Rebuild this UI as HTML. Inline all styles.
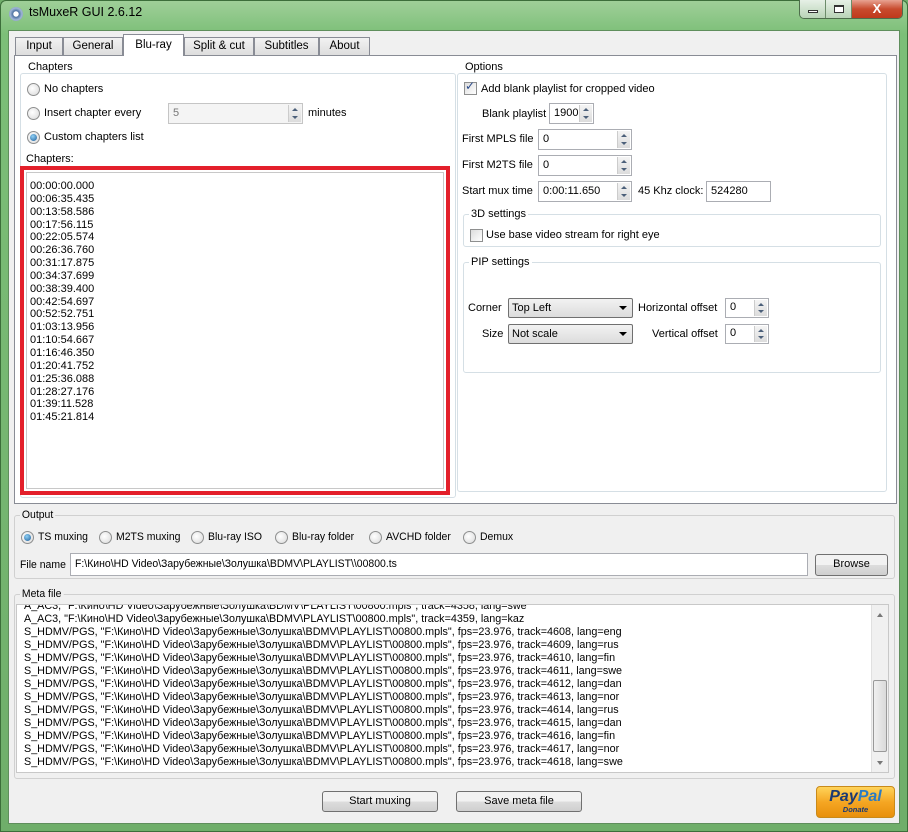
<!DOCTYPE html>
<html><head><meta charset="utf-8"><style>
*{box-sizing:border-box;margin:0;padding:0}
body{width:908px;height:832px;overflow:hidden;position:relative;background:#6fae6a;font-family:"Liberation Sans",sans-serif;font-size:11px;color:#000}
.a{position:absolute}
.frame{left:0;top:0;width:908px;height:832px;background:linear-gradient(180deg,#9fcf98 0%,#7cbf78 4%,#6fae6a 100%);border:1px solid #3c6e3a;border-radius:6px 6px 0 0}
.client{left:8px;top:30px;width:892px;height:794px;background:#f0f0f0;border:1px solid #5f8e5c}
.tab{top:37px;height:19px;border:1px solid #898c95;border-bottom:none;background:linear-gradient(#f2f2f2,#dcdcdc);text-align:center;line-height:17px;font-size:11.5px}
.tab.sel{top:34px;height:22px;background:#fff;z-index:3;line-height:20px}
.pane{left:14px;top:55px;width:883px;height:449px;background:#fff;border:1px solid #898c95}
.grp{border:1px solid #d5dfe5;border-radius:3px}
.rad{width:13px;height:13px;border-radius:50%;border:1px solid #8e8f8f;background:radial-gradient(circle at 40% 40%,#fff,#d8d8d8)}
.rad.on::after{content:"";position:absolute;left:2px;top:2px;width:7px;height:7px;border-radius:50%;background:radial-gradient(circle at 40% 35%,#8fd0f5,#1e5d99)}
.chk{width:13px;height:13px;border:1px solid #8e8f8f;background:linear-gradient(135deg,#dcdcdc,#fff)}
.box{background:#fff;border:1px solid #abadb3;padding-left:4px;line-height:18px}
.spin{width:13px;border-left:1px solid #ccc;background:linear-gradient(#f4f4f4,#dcdcdc);top:1px;bottom:1px;right:1px}
.spin::before,.spin::after{content:"";position:absolute;left:3px;border-left:3px solid transparent;border-right:3px solid transparent}
.spin::before{top:3px;border-bottom:3px solid #4c607a}
.spin::after{bottom:3px;border-top:3px solid #4c607a}
.combo{background:linear-gradient(#f2f2f2,#dcdcdc);border:1px solid #707070;border-radius:2px;padding-left:3px;line-height:18px}
.combo::after{content:"";position:absolute;right:5px;top:7px;border-left:4px solid transparent;border-right:4px solid transparent;border-top:4px solid #000}
.btn{background:linear-gradient(#f2f2f2 50%,#dddddd 50%,#cfcfcf);border:1px solid #707070;border-radius:3px;text-align:center;line-height:19px}
.n{transform-origin:0 0;transform:scaleX(.95);white-space:nowrap}
.meta div{height:13px;line-height:13px;white-space:nowrap;transform-origin:0 0;transform:scaleX(.98)}
</style></head><body>
<div class="a frame"></div>
<div class="a" style="left:9px;top:7px;width:14px;height:14px;border-radius:50%;background:radial-gradient(circle,#fff 25%,#4a6fa0 30%,#9fb6d6 60%,#6a7e99 100%)"></div>
<div class="a" style="left:29px;top:5px;font-size:12.5px;color:#000">tsMuxeR GUI 2.6.12</div>
<div class="a" style="left:799px;top:0;width:104px;height:19px;border:1px solid #4e6e4c;border-top:none;border-radius:0 0 5px 5px;overflow:hidden;display:flex">
 <div style="width:26px;background:linear-gradient(#e6f0e6,#b9d4b7);border-right:1px solid #6c8c6a;position:relative"><div class="a" style="left:8px;top:10px;width:10px;height:3px;border:1px solid #333;background:#fff"></div></div>
 <div style="width:26px;background:linear-gradient(#e6f0e6,#b9d4b7);border-right:1px solid #6c8c6a;position:relative"><div class="a" style="left:8px;top:5px;width:10px;height:8px;border:1px solid #333;border-top-width:2px;background:#fff"></div></div>
 <div style="flex:1;background:linear-gradient(#e8a392,#c84b2e 50%,#c0391c);color:#fff;text-align:center;font-weight:bold;font-size:13px;line-height:18px">X</div>
</div>
<div class="a client"></div>
<div class="a tab" style="left:15px;width:48px">Input</div>
<div class="a tab" style="left:63px;width:60px">General</div>
<div class="a tab sel" style="left:123px;width:61px">Blu-ray</div>
<div class="a tab" style="left:184px;width:70px">Split &amp; cut</div>
<div class="a tab" style="left:254px;width:65px">Subtitles</div>
<div class="a tab" style="left:319px;width:51px">About</div>
<div class="a pane"></div>
<div class="a grp" style="left:20px;top:73px;width:436px;height:425px"></div>
<div class="a" style="left:26px;top:61px;background:#fff;padding:0 2px">Chapters</div>
<div class="a rad" style="left:27px;top:83px"></div><div class="a" style="left:44px;top:83px">No chapters</div>
<div class="a rad" style="left:27px;top:107px"></div><div class="a" style="left:44px;top:107px">Insert chapter every</div>
<div class="a box" style="left:168px;top:103px;width:135px;height:21px;background:#f4f4f4;color:#777;border-color:#c5c5c5">5<div class="a spin"></div></div>
<div class="a" style="left:308px;top:107px">minutes</div>
<div class="a rad on" style="left:27px;top:131px"></div><div class="a" style="left:44px;top:131px">Custom chapters list</div>
<div class="a" style="left:26px;top:153px">Chapters:</div>
<div class="a" style="left:20px;top:166px;width:430px;height:329px;border:4px solid #e3202b;background:#fff">
 <div style="position:absolute;left:2px;top:2px;right:2px;bottom:2px;border:1px solid #c8c8c8"></div>
 <div style="position:absolute;left:6px;top:10px;line-height:12.85px;font-size:11px">00:00:00.000<br>00:06:35.435<br>00:13:58.586<br>00:17:56.115<br>00:22:05.574<br>00:26:36.760<br>00:31:17.875<br>00:34:37.699<br>00:38:39.400<br>00:42:54.697<br>00:52:52.751<br>01:03:13.956<br>01:10:54.667<br>01:16:46.350<br>01:20:41.752<br>01:25:36.088<br>01:28:27.176<br>01:39:11.528<br>01:45:21.814</div>
</div>
<div class="a grp" style="left:457px;top:73px;width:430px;height:419px"></div>
<div class="a" style="left:463px;top:61px;background:#fff;padding:0 2px">Options</div>
<div class="a chk" style="left:464px;top:82px"></div><div class="a" style="left:465px;top:79px;color:#2a4a8a;font-size:12px">✓</div>
<div class="a" style="left:481px;top:83px">Add blank playlist for cropped video</div>
<div class="a" style="left:482px;top:108px">Blank playlist</div>
<div class="a box" style="left:549px;top:103px;width:45px;height:21px">1900<div class="a spin"></div></div>
<div class="a" style="left:462px;top:133px">First MPLS file</div>
<div class="a box" style="left:538px;top:129px;width:94px;height:21px">0<div class="a spin"></div></div>
<div class="a" style="left:462px;top:159px">First M2TS file</div>
<div class="a box" style="left:538px;top:155px;width:94px;height:21px">0<div class="a spin"></div></div>
<div class="a" style="left:462px;top:185px">Start mux time</div>
<div class="a box" style="left:538px;top:181px;width:94px;height:21px">0:00:11.650<div class="a spin"></div></div>
<div class="a" style="left:638px;top:185px">45 Khz clock:</div>
<div class="a box" style="left:706px;top:181px;width:65px;height:21px">524280</div>
<div class="a grp" style="left:463px;top:214px;width:418px;height:33px"></div>
<div class="a" style="left:469px;top:208px;background:#fff;padding:0 2px">3D settings</div>
<div class="a chk" style="left:470px;top:229px"></div><div class="a" style="left:486px;top:229px">Use base video stream for right eye</div>
<div class="a grp" style="left:463px;top:262px;width:418px;height:111px"></div>
<div class="a" style="left:469px;top:256px;background:#fff;padding:0 2px">PIP settings</div>
<div class="a" style="left:468px;top:302px">Corner</div>
<div class="a combo" style="left:508px;top:298px;width:125px;height:20px">Top Left</div>
<div class="a" style="left:638px;top:302px">Horizontal offset</div>
<div class="a box" style="left:725px;top:298px;width:44px;height:20px;line-height:17px">0<div class="a spin"></div></div>
<div class="a" style="left:482px;top:328px">Size</div>
<div class="a combo" style="left:508px;top:324px;width:125px;height:20px">Not scale</div>
<div class="a" style="left:652px;top:328px">Vertical offset</div>
<div class="a box" style="left:725px;top:324px;width:44px;height:20px;line-height:17px">0<div class="a spin"></div></div>
<div class="a grp" style="left:14px;top:515px;width:881px;height:64px;border-color:#d0d0d0"></div>
<div class="a n" style="left:20px;top:509px;background:#f0f0f0;padding:0 2px">Output</div>
<div class="a rad on" style="left:21px;top:531px"></div><div class="a n" style="left:38px;top:531px">TS muxing</div>
<div class="a rad" style="left:99px;top:531px"></div><div class="a n" style="left:116px;top:531px">M2TS muxing</div>
<div class="a rad" style="left:191px;top:531px"></div><div class="a n" style="left:208px;top:531px">Blu-ray ISO</div>
<div class="a rad" style="left:275px;top:531px"></div><div class="a n" style="left:292px;top:531px">Blu-ray folder</div>
<div class="a rad" style="left:369px;top:531px"></div><div class="a n" style="left:386px;top:531px">AVCHD folder</div>
<div class="a rad" style="left:463px;top:531px"></div><div class="a n" style="left:480px;top:531px">Demux</div>
<div class="a n" style="left:20px;top:559px">File name</div>
<div class="a box" style="left:70px;top:553px;width:738px;height:23px;line-height:21px"><span class="n" style="display:inline-block">F:\Кино\HD Video\Зарубежные\Золушка\BDMV\PLAYLIST\\00800.ts</span></div>
<div class="a btn" style="left:815px;top:554px;width:73px;height:22px">Browse</div>
<div class="a grp" style="left:14px;top:594px;width:881px;height:185px;border-color:#d0d0d0"></div>
<div class="a n" style="left:20px;top:588px;background:#f0f0f0;padding:0 2px">Meta file</div>
<div class="a meta" style="left:16px;top:604px;width:873px;height:169px;background:#fff;border:1px solid #c8c8c8;overflow:hidden;padding-left:7px">
<div style="margin-top:-5px">A_AC3, "F:\Кино\HD Video\Зарубежные\Золушка\BDMV\PLAYLIST\00800.mpls", track=4358, lang=swe</div>
<div>A_AC3, "F:\Кино\HD Video\Зарубежные\Золушка\BDMV\PLAYLIST\00800.mpls", track=4359, lang=kaz</div>
<div>S_HDMV/PGS, "F:\Кино\HD Video\Зарубежные\Золушка\BDMV\PLAYLIST\00800.mpls", fps=23.976, track=4608, lang=eng</div>
<div>S_HDMV/PGS, "F:\Кино\HD Video\Зарубежные\Золушка\BDMV\PLAYLIST\00800.mpls", fps=23.976, track=4609, lang=rus</div>
<div>S_HDMV/PGS, "F:\Кино\HD Video\Зарубежные\Золушка\BDMV\PLAYLIST\00800.mpls", fps=23.976, track=4610, lang=fin</div>
<div>S_HDMV/PGS, "F:\Кино\HD Video\Зарубежные\Золушка\BDMV\PLAYLIST\00800.mpls", fps=23.976, track=4611, lang=swe</div>
<div>S_HDMV/PGS, "F:\Кино\HD Video\Зарубежные\Золушка\BDMV\PLAYLIST\00800.mpls", fps=23.976, track=4612, lang=dan</div>
<div>S_HDMV/PGS, "F:\Кино\HD Video\Зарубежные\Золушка\BDMV\PLAYLIST\00800.mpls", fps=23.976, track=4613, lang=nor</div>
<div>S_HDMV/PGS, "F:\Кино\HD Video\Зарубежные\Золушка\BDMV\PLAYLIST\00800.mpls", fps=23.976, track=4614, lang=rus</div>
<div>S_HDMV/PGS, "F:\Кино\HD Video\Зарубежные\Золушка\BDMV\PLAYLIST\00800.mpls", fps=23.976, track=4615, lang=dan</div>
<div>S_HDMV/PGS, "F:\Кино\HD Video\Зарубежные\Золушка\BDMV\PLAYLIST\00800.mpls", fps=23.976, track=4616, lang=fin</div>
<div>S_HDMV/PGS, "F:\Кино\HD Video\Зарубежные\Золушка\BDMV\PLAYLIST\00800.mpls", fps=23.976, track=4617, lang=nor</div>
<div>S_HDMV/PGS, "F:\Кино\HD Video\Зарубежные\Золушка\BDMV\PLAYLIST\00800.mpls", fps=23.976, track=4618, lang=swe</div>
<div class="a" style="right:0;top:0;width:17px;height:167px;background:#f0f0f0;border-left:1px solid #e0e0e0;transform:none">
 <div class="a" style="left:5px;top:8px;border-left:3px solid transparent;border-right:3px solid transparent;border-bottom:4px solid #777;height:0;transform:none"></div>
 <div class="a" style="left:1px;top:75px;width:14px;height:72px;background:linear-gradient(90deg,#f0f0f0,#dadada);border:1px solid #999;border-radius:2px;transform:none"></div>
 <div class="a" style="left:5px;top:156px;border-left:3px solid transparent;border-right:3px solid transparent;border-top:4px solid #777;height:0;transform:none"></div>
</div>
</div>
<div class="a btn" style="left:322px;top:791px;width:116px;height:21px">Start muxing</div>
<div class="a btn" style="left:456px;top:791px;width:126px;height:21px">Save meta file</div>
<div class="a" style="left:816px;top:786px;width:79px;height:32px;border:1px solid #c98a1a;border-radius:4px;background:linear-gradient(#ffd35a,#f5a623 50%,#e8900c);text-align:center">
 <div style="font-weight:bold;font-style:italic;font-size:16px;line-height:17px;margin-top:1px"><span style="color:#1b3a73">Pay</span><span style="color:#2b7bc4">Pal</span></div>
 <div style="font-weight:bold;font-style:italic;font-size:7.5px;color:#1b3a73;line-height:9px">Donate</div>
</div>
</body></html>
